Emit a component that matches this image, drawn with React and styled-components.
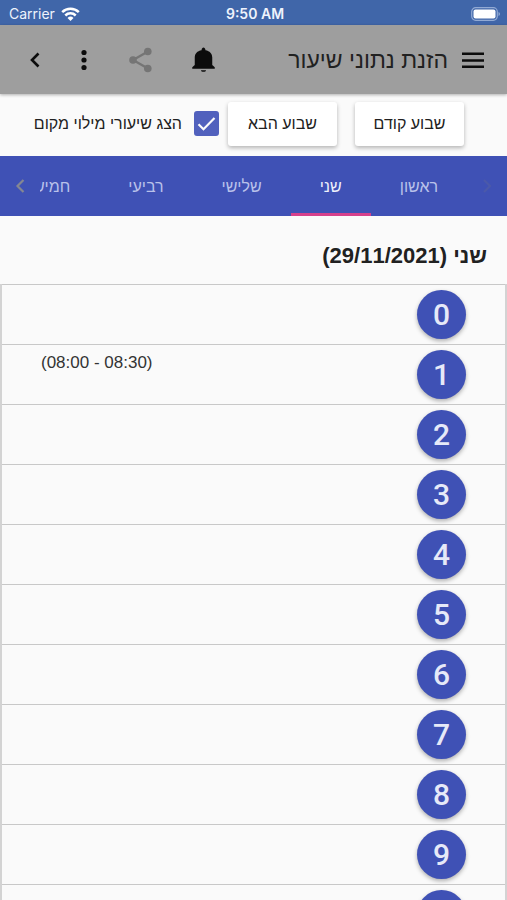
import React, { Component } from 'react'
import styled, { createGlobalStyle } from 'styled-components'

const GlobalStyle = createGlobalStyle`
	* {
		box-sizing: border-box;
	}
	body {
		margin: 0;
		background: #fafafa;
		color: #212121;
		font-family: 'Liberation Sans', sans-serif;
	}
	button {
		font-family: inherit;
		border: 0;
		padding: 0;
		background: none;
		color: inherit;
		cursor: pointer;
	}
`

const Page = styled.div`
	display: flex;
	flex-direction: column;
	height: 100vh;
	overflow: hidden;
`

const StatusBar = styled.div`
	display: grid;
	grid-template-columns: 1fr auto 1fr;
	align-items: center;
	flex: none;
	height: 25px;
	padding: 2px 6px 0 9px;
	background: #4066a9;
	color: #eef3fc;
	font-family: Inter, sans-serif;
	font-size: 14px;
`

const Carrier = styled.div`
	display: flex;
	align-items: center;
	gap: 6px;
`

const Clock = styled.div`
	font-weight: 600;
`

const Battery = styled.div`
	display: flex;
	justify-content: flex-end;
`

const Toolbar = styled.header`
	display: flex;
	align-items: center;
	flex: none;
	height: 69px;
	padding: 0 22px 0 25px;
	background: #9e9e9e;
	box-shadow: 0 1px 3px rgba(0, 0, 0, 0.3);
	z-index: 1;
`

const Title = styled.h1`
	flex: 1;
	margin: 0;
	padding: 0 13px 0 0;
	font-size: 23px;
	font-weight: 400;
	line-height: 32px;
	white-space: nowrap;
`

const IconButton = styled.button`
	display: flex;
	color: ${props => (props.$muted ? '#757575' : '#0c0c0c')};
`

const ToolbarActions = styled.div`
	display: flex;
	align-items: center;
	gap: 30px;
`

const Filters = styled.div`
	display: flex;
	align-items: center;
	flex: none;
	gap: 18px;
	height: 62px;
	padding: 0 43px 3px 8px;
	font-size: 16px;
`

const WeekButton = styled.button`
	flex: none;
	width: 109px;
	height: 44px;
	border-radius: 3px;
	background: #fff;
	box-shadow: 0 2px 4px rgba(0, 0, 0, 0.28);
	font-size: 16px;
`

const CheckLabel = styled.label`
	display: flex;
	align-items: center;
	gap: 12px;
	margin-right: -9px;
	white-space: nowrap;
`

const Checkbox = styled.input`
	appearance: none;
	flex: none;
	width: 25px;
	height: 25px;
	margin: 0;
	border: 2px solid #5161bd;
	border-radius: 3px;

	&:checked {
		background: #5161bd
			url("data:image/svg+xml,%3Csvg xmlns='http://www.w3.org/2000/svg' viewBox='0 0 21 21'%3E%3Cpath d='M2.5 11.2l5 5L18.5 5' fill='none' stroke='%23fafafa' stroke-width='2.2'/%3E%3C/svg%3E")
			center / 21px no-repeat;
	}
`

const TabBar = styled.nav`
	display: flex;
	flex: none;
	height: 60px;
	background: #3f51b5;
`

const TabArrow = styled.button`
	display: flex;
	align-items: center;
	justify-content: center;
	flex: none;
	width: 40px;
	color: ${props => (props.disabled ? '#4b59aa' : '#858792')};
`

const TabList = styled.div`
	display: flex;
	flex: 1;
	overflow: hidden;
`

const Tab = styled.button`
	flex: none;
	min-width: 80px;
	padding: 4px 29px 0;
	border-bottom: 3px solid ${props => (props.$active ? '#d6408c' : 'transparent')};
	color: ${props => (props.$active ? '#eef0fb' : '#b9c1ea')};
	font-size: 16px;
`

const Lessons = styled.main`
	flex: 1;
	overflow-y: auto;
	scrollbar-width: none;
`

const DayTitle = styled.h2`
	margin: 0;
	padding: 24px 20px 12px;
	font-size: 22px;
	font-weight: 700;
	line-height: 32px;
`

const LessonTable = styled.table`
	width: 100%;
	border-collapse: collapse;
	border: 2px solid #d3d3d3;
	border-top-width: 1px;
`

const LessonRow = styled.tr`
	height: 60px;
	border-top: 1px solid #c8c8c8;
`

const HourCell = styled.th`
	width: 128px;
	padding: 0 39px 0 0;
	text-align: right;
`

const HourButton = styled.button`
	display: block;
	width: 49px;
	height: 49px;
	border-radius: 50%;
	background: #3f51b5;
	box-shadow: 0 2px 4px rgba(0, 0, 0, 0.3);
	color: #e6e9f8;
	font-family: Roboto, sans-serif;
	font-size: 30px;
	font-weight: 500;
`

const TimeCell = styled.td`
	padding: 8px 0 0 39px;
	vertical-align: top;
	text-align: left;
	font-size: 17px;
	line-height: 20px;
	color: #333;
`

const WifiIcon = () => (
	<svg width="19" height="14" viewBox="0 0 19 14" fill="none" stroke="#fff" strokeWidth="2.5">
		<path d="M1.2 5.2a12 12 0 0 1 16.6 0" />
		<path d="M4.3 8.5a7.4 7.4 0 0 1 10.4 0" />
		<path d="M9.5 14L6.5 10.9a4.3 4.3 0 0 1 6 0z" fill="#fff" stroke="none" />
	</svg>
)

const BatteryIcon = () => (
	<svg width="30" height="14" viewBox="0 0 30 14">
		<rect x="0.7" y="0.7" width="25.6" height="12.6" rx="4" fill="none" stroke="#92aad4" strokeWidth="1.2" />
		<rect x="2.5" y="2.5" width="22" height="9" rx="2" fill="#fff" />
		<path d="M27.5 5v4c2-.8 2-3.2 0-4z" fill="#92aad4" />
	</svg>
)

const MenuIcon = () => (
	<svg width="24" height="18" viewBox="0 0 24 18" fill="currentColor">
		<path d="M1 1.5h22V4H1zM1 8.2h22v2.5H1zM1 14.5h22V17H1z" />
	</svg>
)

const BellIcon = () => (
	<svg width="31" height="30" viewBox="0 0 24 24" fill="currentColor">
		<path d="M12 21.4c1.1 0 2-.5 2-1.300h-4c0 .8.9 1.300 2 1.300zM19 15.900V10c0-3.300-2-5.300-5.400-5.900C13.400 2.700 12.800 2 12 2s-1.400.7-1.600 2.100C7 4.700 5 6.700 5 10v5.900L3 17.700v1.200h18v-1.200z" />
	</svg>
)

const ShareIcon = () => (
	<svg width="35" height="28" viewBox="0 0 35 28" fill="currentColor">
		<path d="M10 14L25 5.5M10 14L25 22.5" stroke="currentColor" strokeWidth="2.4" />
		<circle cx="10" cy="14" r="3.8" />
		<circle cx="24.8" cy="5.5" r="3.8" />
		<circle cx="24.8" cy="22.5" r="3.8" />
	</svg>
)

const MoreIcon = () => (
	<svg width="18" height="24" viewBox="0 0 18 24" fill="currentColor">
		<circle cx="9" cy="4.5" r="2.6" />
		<circle cx="9" cy="12" r="2.6" />
		<circle cx="9" cy="19.5" r="2.6" />
	</svg>
)

const BackIcon = () => (
	<svg width="20" height="20" viewBox="0 0 20 20" fill="none" stroke="currentColor" strokeWidth="2.6">
		<path d="M13.5 3.5L7 10l6.5 6.5" />
	</svg>
)

const ChevronIcon = ({ forward }) => (
	<svg width="12" height="16" viewBox="0 0 12 16" fill="none" stroke="currentColor" strokeWidth="2.2">
		<path d={forward ? 'M9.5 2L3.5 8l6 6' : 'M3 2l6 6-6 6'} />
	</svg>
)

const days = ['ראשון', 'שני', 'שלישי', 'רביעי', 'חמישי', 'שישי']

const lessons = [
	{ hour: 0 },
	{ hour: 1, time: '(08:00 - 08:30)' },
	{ hour: 2 },
	{ hour: 3 },
	{ hour: 4 },
	{ hour: 5 },
	{ hour: 6 },
	{ hour: 7 },
	{ hour: 8 },
	{ hour: 9 },
	{ hour: 10 }
]

class App extends Component {
	state = { day: 1, showSubstitutes: true }

	toggleSubstitutes = () => {
		this.setState({ showSubstitutes: !this.state.showSubstitutes })
	}

	render() {
		const { day, showSubstitutes } = this.state

		return (
			<Page>
				<GlobalStyle />
				<StatusBar>
					<Carrier>
						Carrier
						<WifiIcon />
					</Carrier>
					<Clock>9:50 AM</Clock>
					<Battery>
						<BatteryIcon />
					</Battery>
				</StatusBar>
				<Toolbar dir="rtl">
					<IconButton aria-label="תפריט">
						<MenuIcon />
					</IconButton>
					<Title>הזנת נתוני שיעור</Title>
					<ToolbarActions>
						<IconButton aria-label="התראות">
							<BellIcon />
						</IconButton>
						<IconButton $muted aria-label="שיתוף">
							<ShareIcon />
						</IconButton>
						<IconButton aria-label="עוד">
							<MoreIcon />
						</IconButton>
						<IconButton aria-label="חזרה">
							<BackIcon />
						</IconButton>
					</ToolbarActions>
				</Toolbar>
				<Filters dir="rtl">
					<WeekButton>שבוע קודם</WeekButton>
					<WeekButton>שבוע הבא</WeekButton>
					<CheckLabel>
						<Checkbox
							type="checkbox"
							checked={showSubstitutes}
							onChange={this.toggleSubstitutes}
						/>
						הצג שיעורי מילוי מקום
					</CheckLabel>
				</Filters>
				<TabBar dir="rtl">
					<TabArrow disabled aria-label="הקודם">
						<ChevronIcon />
					</TabArrow>
					<TabList role="tablist">
						{days.map((name, i) => (
							<Tab
								key={name}
								role="tab"
								aria-selected={i === day}
								$active={i === day}
								onClick={() => this.setState({ day: i })}
							>
								{name}
							</Tab>
						))}
					</TabList>
					<TabArrow aria-label="הבא">
						<ChevronIcon forward />
					</TabArrow>
				</TabBar>
				<Lessons dir="rtl">
					<DayTitle>{days[day]} (29/11/2021)</DayTitle>
					<LessonTable>
						<tbody>
							{lessons.map(({ hour, time }) => (
								<LessonRow key={hour}>
									<HourCell scope="row">
										<HourButton>{hour}</HourButton>
									</HourCell>
									<TimeCell>
										<bdi dir="ltr">{time}</bdi>
									</TimeCell>
								</LessonRow>
							))}
						</tbody>
					</LessonTable>
				</Lessons>
			</Page>
		)
	}
}

export default App
